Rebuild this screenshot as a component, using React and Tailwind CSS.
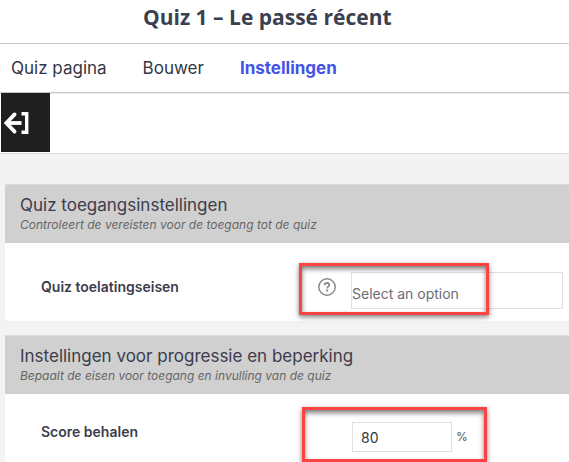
const tabs = [
  { label: "Quiz pagina", active: false },
  { label: "Bouwer", active: false },
  { label: "Instellingen", active: true },
];

const ExitIcon = () => (
  <svg width="26" height="24" viewBox="0 0 26 24" fill="none" stroke="#fff" aria-hidden="true">
    <path d="M11.600 3.400 3.400 12l8.200 8.600" strokeWidth="3.800" strokeLinecap="round" />
    <path d="M4 12h14.500" strokeWidth="3.800" />
    <path d="M18.500 2.700h5.200v18.600h-5.200" strokeWidth="3.400" />
  </svg>
);

const HelpIcon = () => (
  <svg width="18" height="18" viewBox="0 0 18 18" fill="none" stroke="#8a8a8a" aria-hidden="true">
    <circle cx="9" cy="9" r="8.2" strokeWidth="1.5" />
    <path d="M6.700 7.200C6.700 5.800 7.700 5 9 5s2.300.8 2.300 2c0 1.600-2.200 1.700-2.200 3.400" strokeWidth="1.800" />
    <path d="M8.100 12.500h2" strokeWidth="1.900" />
  </svg>
);

const Highlight = ({ className }) => (
  <div
    className={`pointer-events-none absolute border-3 border-[#fb4343] shadow-[0_2px_5px_rgba(0,0,0,0.5),inset_0_3px_5px_rgba(0,0,0,0.5)] ${className}`}
  />
);

const Section = ({ title, description, children }) => (
  <section className="rounded-b bg-white">
    <header className="border-t border-[#dcdcdc] bg-[#d0d0d0] px-[15px] pt-2 pb-2.5">
      <h2 className="text-[17px] leading-6 text-[#3c3c4c]">{title}</h2>
      <p className="text-xs leading-4 text-[#666] italic">{description}</p>
    </header>
    {children}
  </section>
);

export default function App() {
  return (
    <div className="min-h-screen bg-[#f3f3f3] font-['Inter','Liberation_Sans',sans-serif]">
      <div className="bg-white">
        {/* Title */}
        <div className="border-b border-[#c6c6c6] pt-[3px] pb-3 pl-[143px]">
          <h1 className="font-['Open_Sans','Noto_Sans',sans-serif] text-[21px] leading-7 font-bold text-[#3c3f50]">
            Quiz 1 – Le passé récent
          </h1>
        </div>

        {/* Tabs */}
        <nav className="flex gap-9 border-b border-[#c6c6c6] px-[11px] py-3 text-[17px] leading-6 shadow-[0_1px_0_#ececec]">
          {tabs.map((tab) => (
            <a
              key={tab.label}
              href="#"
              className={tab.active ? "font-bold text-[#4353e8]" : "text-[#333645]"}
            >
              {tab.label}
            </a>
          ))}
        </nav>

        <div className="flex border-b border-[#dfdfdf] pb-px pl-px">
          <button
            type="button"
            aria-label="Terug"
            className="flex h-[59px] w-[49px] items-center bg-[#1f1f1f] pl-0.5"
          >
            <ExitIcon />
          </button>
        </div>
      </div>

      <main className="flex flex-col gap-3.5 pt-[30px] pl-[5px]">
        <Section
          title="Quiz toegangsinstellingen"
          description="Controleert de vereisten voor de toegang tot de quiz"
        >
          <div className="relative flex pt-[29px] pr-1.5 pb-3 pl-9">
            <label
              htmlFor="requirements"
              className="w-[277px] pt-[3px] text-sm leading-6 font-semibold text-[#3c3c4c]"
            >
              Quiz toelatingseisen
            </label>
            <button type="button" aria-label="Help" className="mt-1.5 mr-[15px] h-[18px]">
              <HelpIcon />
            </button>
            <select
              id="requirements"
              className="h-[37px] min-w-0 flex-1 appearance-none border border-[#e0e0e0] bg-white pt-1.5 text-sm text-[#6d6d72]"
            >
              <option>Select an option</option>
            </select>
            <Highlight className="top-5 left-[294px] h-[52px] w-[190px]" />
          </div>
        </Section>

        <Section
          title="Instellingen voor progressie en beperking"
          description="Bepaalt de eisen voor toegang en invulling van de quiz"
        >
          <div className="relative flex items-start pt-7 pb-2.5 pl-9">
            <label
              htmlFor="score"
              className="w-[311px] text-sm leading-5 font-semibold text-[#3c3c4c]"
            >
              Score behalen
            </label>
            <input
              id="score"
              type="text"
              defaultValue="80"
              className="h-[30px] w-[100px] border border-[#e0e0e0] bg-white px-2 text-sm text-[#32373c]"
            />
            <span className="ml-1 text-xs leading-[30px] text-[#555]">%</span>
            <Highlight className="top-[13px] left-[297px] h-[55px] w-[185px]" />
          </div>
        </Section>
      </main>
    </div>
  );
}
